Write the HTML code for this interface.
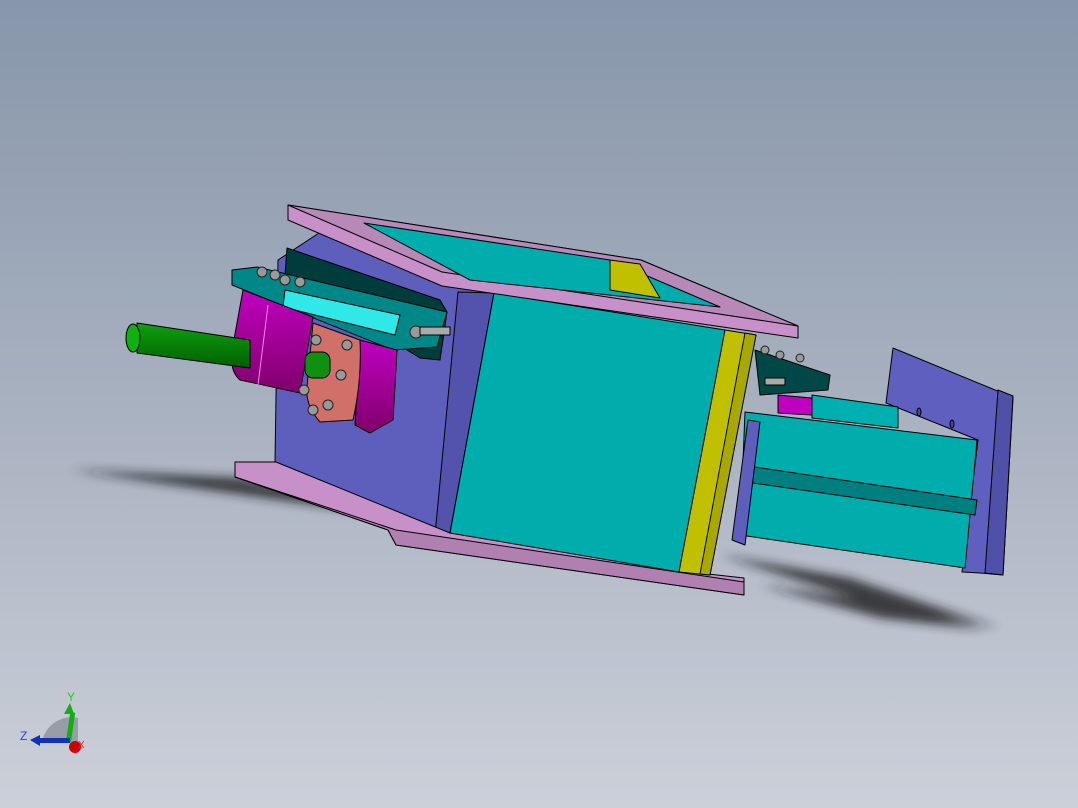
<!DOCTYPE html>
<html><head><meta charset="utf-8"><style>
html,body{margin:0;padding:0;width:1078px;height:808px;overflow:hidden}
svg{display:block}
</style></head><body>
<svg width="1078" height="808" viewBox="0 0 1078 808" xmlns="http://www.w3.org/2000/svg" stroke="#000" stroke-width="1" stroke-linejoin="round">
<defs>
<linearGradient id="bg" x1="0" y1="0" x2="0" y2="1">
<stop offset="0" stop-color="#8796aa"/><stop offset="0.5" stop-color="#a8b1c0"/><stop offset="1" stop-color="#ccd0d9"/>
</linearGradient>
<filter id="bl" x="-20%" y="-50%" width="140%" height="200%"><feGaussianBlur stdDeviation="5"/></filter>
<linearGradient id="mag" x1="0" y1="0" x2="0" y2="1"><stop offset="0" stop-color="#c000c0"/><stop offset="1" stop-color="#80006a"/></linearGradient>
<linearGradient id="gr" x1="0" y1="0" x2="0" y2="1"><stop offset="0" stop-color="#10a010"/><stop offset="1" stop-color="#006000"/></linearGradient>
</defs>
<rect width="1078" height="808" fill="url(#bg)" stroke="none"/>
<g stroke="none" filter="url(#bl)" fill="#1a1a1a" opacity="0.8">
<polygon points="70,470 240,478 440,522 280,500"/>
<polygon points="720,555 850,578 1000,628 860,600"/>
<polygon points="760,585 900,605 985,630 880,618"/>
</g>
<!-- right plate -->
<polygon points="893,348 1000,392 1013,398 1003,575 980,573 962,572 978,440 886,403" fill="#5f5fbf"/>
<polygon points="998,390 1013,396 1003,575 985,573" fill="#5050a8"/>
<ellipse cx="919" cy="412" rx="2" ry="4" fill="#4848a0"/>
<ellipse cx="952" cy="424" rx="2" ry="4" fill="#4848a0"/>
<!-- cylinder -->
<polygon points="812,395 898,407 898,428 812,418" fill="#00b0b0"/>
<polygon points="745,412 977,440 965,568 740,535" fill="#00adad"/>
<polygon points="748,466 977,500 975,515 746,482" fill="#007f80"/>
<polygon points="778,395 812,398 812,415 778,413" fill="#c000c0"/>
<polygon points="755,350 830,375 828,390 760,395" fill="#004848"/>
<!-- left purple side -->
<polygon points="319,233 484,293 456,535 434,535 275,462 278,260" fill="#5e5ebc"/>
<polygon points="458,292 494,293 450,533 435,535" fill="#5353ad"/>
<!-- bottom flange -->
<polygon points="235,462 276,462 450,533 690,572 744,578 744,595 396,545 388,530 235,477" fill="#c890c8"/>
<polygon points="235,477 388,530 396,545 744,595 744,582 396,530" fill="#b080b0"/>
<!-- front cyan -->
<polygon points="494,293 725,330 679,572 450,533" fill="#00adad"/>
<!-- yellow -->
<polygon points="725,330 756,335 710,575 679,572" fill="#c0c000"/>
<polygon points="745,333 756,335 710,575 700,574" fill="#a8a800"/>
<polygon points="748,420 760,422 745,545 732,540" fill="#5e5ebc"/>
<!-- top flange -->
<polygon points="288,205 641,260 798,326 798,338 442,286 288,220" fill="#c890c8"/>
<polygon points="288,205 641,260 798,326 442,272" fill="#b888b8"/>
<polygon points="364,223 610,260 720,307 470,280" fill="#00adad"/>
<polygon points="610,260 640,264 660,298 610,290" fill="#c0c000"/>
<!-- dark teal plate -->
<polygon points="287,248 440,300 447,312 440,360 420,358 285,275" fill="#003c3c"/>
<!-- teal bracket -->
<polygon points="232,270 257,267 447,312 437,347 393,350 232,285" fill="#008888"/>
<polygon points="285,290 400,315 395,335 283,307" fill="#30e8e8"/>
<!-- magenta cylinder -->
<path d="M243,290 L313,317 L300,393 L240,380 Q228,370 233,345 Z" fill="url(#mag)"/>
<line x1="268" y1="305" x2="258" y2="385" stroke="#ff80ff"/>
<!-- green shaft -->
<polygon points="137,323 250,340 250,368 137,353" fill="url(#gr)"/>
<ellipse cx="133" cy="338" rx="7" ry="14" fill="#10b010"/>
<!-- salmon flange -->
<polygon points="360,340 397,350 393,420 370,433 355,425" fill="url(#mag)"/>
<path d="M313,323 L360,340 Q362,380 353,420 L320,422 Q305,405 307,387 Z" fill="#d07068"/>
<rect x="305" y="352" width="25" height="26" rx="8" fill="#109010"/>
<g fill="#999" stroke="#222">
<circle cx="316" cy="340" r="5"/><circle cx="347" cy="345" r="5"/><circle cx="341" cy="375" r="5"/>
<circle cx="304" cy="390" r="5"/><circle cx="328" cy="405" r="5"/><circle cx="313" cy="410" r="5"/>
<circle cx="262" cy="272" r="5"/><circle cx="275" cy="275" r="5"/><circle cx="285" cy="280" r="5"/><circle cx="300" cy="282" r="5"/>
<circle cx="416" cy="332" r="6"/><circle cx="765" cy="350" r="4"/><circle cx="780" cy="355" r="4"/><circle cx="800" cy="358" r="4"/>
</g>
<rect x="420" y="327" width="30" height="8" fill="#aaa"/>
<rect x="765" y="378" width="20" height="7" fill="#aaa"/>
<!-- axis triad -->
<g stroke="none">
<path d="M42,742 A30,30 0 0 1 78,718 L78,742 Z" fill="#7a7f88" opacity="0.6"/>
<rect x="66" y="712" width="5" height="30" fill="#10b010" transform="rotate(8 68 742)"/>
<polygon points="64,714 74,714 70,703" fill="#10b010"/>
<rect x="38" y="738" width="32" height="5" fill="#1030c0"/>
<polygon points="40,735 40,746 30,740" fill="#1030c0"/>
<circle cx="75" cy="747" r="6" fill="#d00000"/>
</g>
<g font-family="Liberation Sans, sans-serif" font-size="12" stroke="none">
<text x="67" y="701" fill="#20d020">Y</text>
<text x="20" y="740" fill="#2040ff">Z</text>
<text x="78" y="748" fill="#ff2020" font-size="10">X</text>
</g>
</svg>
</body></html>
